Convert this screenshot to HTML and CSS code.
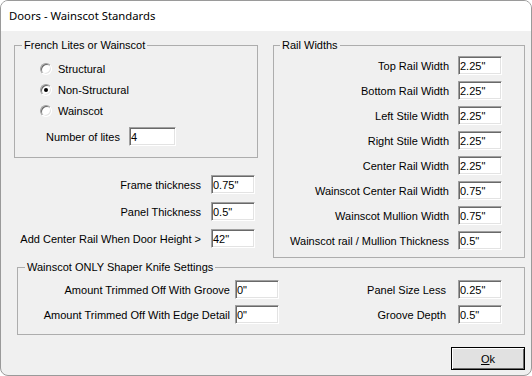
FILE: index.html
```html
<!DOCTYPE html>
<html lang="en">
<head>
  <meta charset="UTF-8" />
  <title>Doors - Wainscot Standards</title>
  <link rel="stylesheet" href="styles.css">
</head>
<body>

<div class="window">
  <div class="titlebar">Doors - Wainscot Standards</div>

  <div class="dialog">
    <div class="top">

      <div class="left-col">
        <fieldset class="group lites">
          <legend>French Lites or Wainscot</legend>
          <div class="radios">
            <label class="radio-row"><span class="radio"></span>Structural</label>
            <label class="radio-row"><span class="radio checked"></span>Non-Structural</label>
            <label class="radio-row"><span class="radio"></span>Wainscot</label>
          </div>
          <div class="lites-row">
            <span>Number of lites</span>
            <input class="field lites-field" type="text" value="4">
          </div>
        </fieldset>

        <div class="form-grid frame-fields">
          <span class="lbl">Frame thickness</span>
          <input class="field" type="text" value="0.75&quot;">
          <span class="lbl">Panel Thickness</span>
          <input class="field" type="text" value="0.5&quot;">
          <span class="lbl">Add Center Rail When Door Height &gt;</span>
          <input class="field" type="text" value="42&quot;">
        </div>
      </div>

      <fieldset class="group rails">
        <legend>Rail Widths</legend>
        <div class="form-grid rail-grid">
          <span class="lbl">Top Rail Width</span>
          <input class="field" type="text" value="2.25&quot;">
          <span class="lbl">Bottom Rail Width</span>
          <input class="field" type="text" value="2.25&quot;">
          <span class="lbl">Left Stile Width</span>
          <input class="field" type="text" value="2.25&quot;">
          <span class="lbl">Right Stile Width</span>
          <input class="field" type="text" value="2.25&quot;">
          <span class="lbl">Center Rail Width</span>
          <input class="field" type="text" value="2.25&quot;">
          <span class="lbl">Wainscot Center Rail Width</span>
          <input class="field" type="text" value="0.75&quot;">
          <span class="lbl">Wainscot Mullion Width</span>
          <input class="field" type="text" value="0.75&quot;">
          <span class="lbl">Wainscot rail / Mullion Thickness</span>
          <input class="field" type="text" value="0.5&quot;">
        </div>
      </fieldset>
    </div>

    <fieldset class="group knife">
      <legend>Wainscot ONLY Shaper Knife Settings</legend>
      <div class="knife-grid">
        <span class="lbl">Amount Trimmed Off With Groove</span>
        <input class="field" type="text" value="0&quot;">
        <span class="lbl lbl-right">Panel Size Less</span>
        <input class="field" type="text" value="0.25&quot;">
        <span class="lbl">Amount Trimmed Off With Edge Detail</span>
        <input class="field" type="text" value="0&quot;">
        <span class="lbl lbl-right">Groove Depth</span>
        <input class="field" type="text" value="0.5&quot;">
      </div>
    </fieldset>

    <div class="actions">
      <button class="btn-ok" type="button"><u>O</u>k</button>
    </div>
  </div>
</div>

</body>
</html>
```

FILE: styles.css
```css
:root {
  --face: #f0f0f0;
  --edge: #a0a0a0;
  --shadow: #696969;
  --light: #e3e3e3;
  --frame: #adadad;
}

* {
  box-sizing: border-box;
}

body {
  margin: 0;
  font-family: "Liberation Sans", Arial, sans-serif;
  font-size: 11px;
  color: #000;
}

.window {
  width: 532px;
  height: 376px;
  border: 1px solid #9a9a9a;
  border-radius: 8px;
  overflow: hidden;
  background: var(--face);
  display: flex;
  flex-direction: column;
}

.titlebar {
  height: 30px;
  line-height: 30px;
  padding-left: 8px;
  background: #fff;
  font-family: "Noto Sans", "Open Sans", sans-serif;
  font-size: 11.3px;
}

.dialog {
  flex: 1;
  padding: 8px 6px 0 13px;
}

.top {
  display: flex;
  align-items: flex-start;
  gap: 15px;
}

/* group boxes */
.group {
  margin: 0;
  padding: 0;
  min-width: 0;
  border: 1px solid var(--frame);
}

.group legend {
  padding: 0 2px;
  line-height: 13px;
}

.left-col {
  width: 244px;
}

.lites {
  padding: 7px 0 11px 25px;
}

.lites legend {
  margin-left: -18px;
}

.radios {
  display: flex;
  flex-direction: column;
  gap: 1px;
}

.radio-row {
  height: 20px;
  display: flex;
  align-items: center;
  gap: 6px;
}

.radio {
  position: relative;
  width: 12px;
  height: 12px;
  border-radius: 50%;
  border: 1px solid;
  border-color: var(--edge) #fff #fff var(--edge);
  background: #fff;
  box-shadow: inset 1px 1px var(--shadow), inset -1px -1px var(--light);
}

.radio.checked::after {
  content: "";
  position: absolute;
  left: 3px;
  top: 3px;
  width: 4px;
  height: 4px;
  border-radius: 50%;
  background: #000;
}

.lites-row {
  margin-top: 6px;
  padding-left: 6px;
  display: flex;
  align-items: center;
  gap: 9px;
}

/* text boxes */
.field {
  width: 44px;
  height: 19px;
  margin: 0;
  padding: 0 0 0 1px;
  font: inherit;
  color: #000;
  background: #fff;
  border: 1px solid;
  border-color: var(--edge) #fff #fff var(--edge);
  box-shadow: inset 1px 1px var(--shadow), inset -1px -1px var(--light);
  outline: none;
}

.lites-field {
  width: 47px;
}

.form-grid {
  display: grid;
  grid-template-columns: 1fr 44px;
  align-items: center;
}

.lbl {
  text-align: right;
  white-space: nowrap;
}

.frame-fields {
  margin-top: 17px;
  padding-right: 3px;
  column-gap: 10px;
  row-gap: 8px;
}

.rails {
  width: 252px;
  padding: 4px 22px 7px 0;
}

.rails legend {
  margin-left: 6px;
}

.rail-grid {
  column-gap: 9px;
  row-gap: 6px;
}

.knife {
  margin: 3px 0 0 3px;
  padding: 6px 22px 10px 0;
}

.knife legend {
  margin-left: 7px;
}

.knife-grid {
  display: grid;
  grid-template-columns: 212px 44px 1fr 44px;
  column-gap: 5px;
  row-gap: 6px;
  align-items: center;
}

.lbl-right {
  padding-right: 7px;
}

.actions {
  margin-top: 12px;
  display: flex;
  justify-content: flex-end;
}

.btn-ok {
  width: 74px;
  height: 23px;
  padding: 0;
  font: inherit;
  color: #000;
  background: #e1e1e1;
  border: 1px solid #000;
  box-shadow: inset 1px 1px #fff, inset -1px -1px var(--shadow);
}
```
